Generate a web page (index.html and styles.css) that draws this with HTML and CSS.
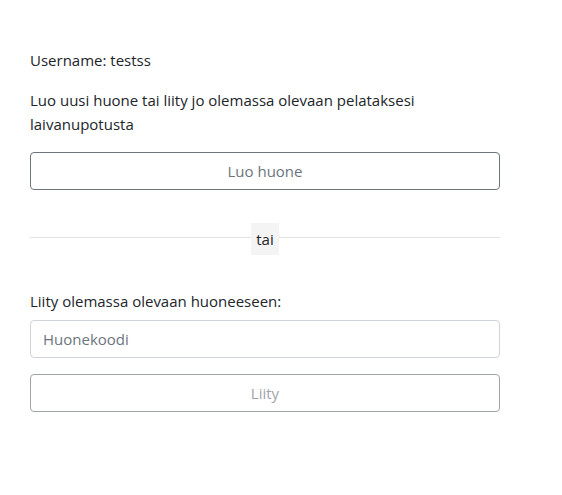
FILE: index.html
```html
<!DOCTYPE html>
<html lang="fi">
<head>
<meta charset="utf-8">
<link rel="stylesheet" href="styles.css">
</head>
<body>
<main class="page">
  <p class="text">Username: testss</p>
  <p class="text">Luo uusi huone tai liity jo olemassa olevaan pelataksesi laivanupotusta</p>
  <button class="btn" type="button">Luo huone</button>
  <div class="divider"><span class="divider-label">tai</span></div>
  <label class="label" for="code">Liity olemassa olevaan huoneeseen:</label>
  <input class="input" id="code" type="text" placeholder="Huonekoodi">
  <button class="btn btn-disabled" type="button" disabled>Liity</button>
</main>
</body>
</html>
```
FILE: styles.css
```css
* { box-sizing: border-box; }
html, body { margin: 0; background: #fff; }
body {
  font-family: "Open Sans", "Noto Sans", sans-serif;
  font-size: 15px;
  line-height: 24px;
  color: #212529;
}
.page {
  width: 470px;
  margin-left: 30px;
  padding-top: 48px;
  display: flex;
  flex-direction: column;
}
.text { margin: 0 0 16px; }
.btn {
  display: block;
  width: 100%;
  height: 38px;
  font: inherit;
  color: #6c757d;
  background: transparent;
  border: 1px solid #6c757d;
  border-radius: 4px;
  text-align: center;
  padding: 0 12px;
}
.btn-disabled { opacity: 0.65; margin-top: 16px; }
.divider {
  margin: 33px 0 34px;
  height: 32px;
  display: flex;
  align-items: center;
  justify-content: center;
  background: linear-gradient(#e2e2e2, #e2e2e2) 0 14px / 100% 1px no-repeat;
}
.divider-label {
  background: #f4f4f4;
  padding: 4px 5px;
  line-height: 24px;
}
.label { margin-bottom: 7px; }
.input {
  display: block;
  width: 100%;
  height: 38px;
  font: inherit;
  color: #495057;
  border: 1px solid #ced4da;
  border-radius: 4px;
  padding: 6px 12px;
}
.input::placeholder { color: #6c757d; opacity: 1; }
```
